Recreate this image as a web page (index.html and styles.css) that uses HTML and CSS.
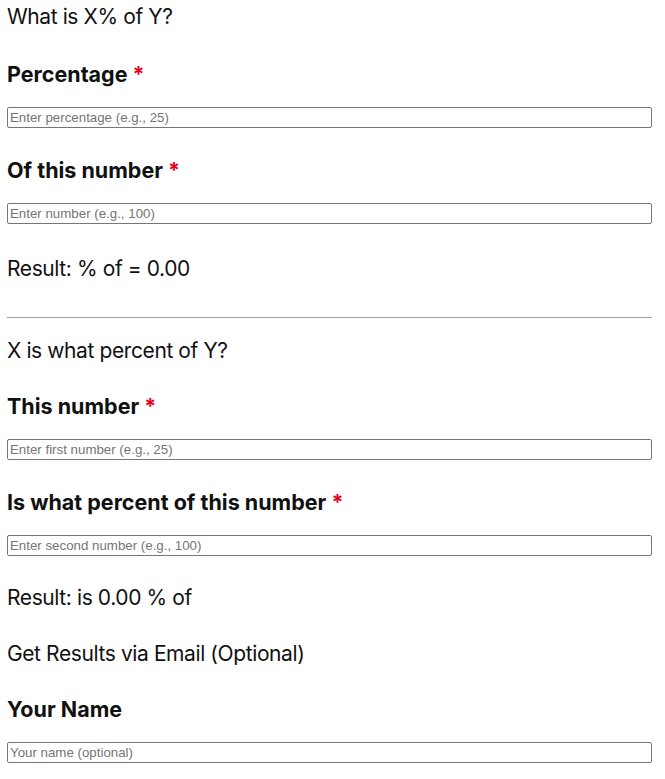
FILE: index.html
```html
<!DOCTYPE html>
<html lang="en">
<head>
<meta charset="utf-8">
<title>Percentage Calculator</title>
<link rel="stylesheet" href="styles.css">
</head>
<body>
<main class="calc">
  <section class="block">
    <h2 class="title">What is X% of Y?</h2>
    <div class="group">
      <label class="label" for="pct">Percentage <span class="req">*</span></label>
      <input class="field" id="pct" type="text" placeholder="Enter percentage (e.g., 25)">
    </div>
    <div class="group">
      <label class="label" for="num">Of this number <span class="req">*</span></label>
      <input class="field" id="num" type="text" placeholder="Enter number (e.g., 100)">
    </div>
    <p class="result">Result: % of = 0.00</p>
  </section>
  <hr class="divider">
  <section class="block">
    <h2 class="title title-second">X is what percent of Y?</h2>
    <div class="group">
      <label class="label" for="first">This number <span class="req">*</span></label>
      <input class="field" id="first" type="text" placeholder="Enter first number (e.g., 25)">
    </div>
    <div class="group">
      <label class="label" for="second">Is what percent of this number <span class="req">*</span></label>
      <input class="field" id="second" type="text" placeholder="Enter second number (e.g., 100)">
    </div>
    <p class="result">Result: is 0.00 % of</p>
    <p class="subtitle">Get Results via Email (Optional)</p>
    <div class="group">
      <label class="label" for="name">Your Name</label>
      <input class="field" id="name" type="text" placeholder="Your name (optional)">
    </div>
  </section>
</main>
</body>
</html>
```

FILE: styles.css
```css
html, body {
  margin: 0;
  padding: 0;
  background: #ffffff;
}

body {
  font-family: Inter, "Noto Sans", "Liberation Sans", sans-serif;
  color: #111111;
}

.calc {
  padding: 3px 13px 0 7px;
  display: flex;
  flex-direction: column;
}

.block {
  display: flex;
  flex-direction: column;
}

.title,
.result,
.subtitle {
  margin: 0;
  font-size: 21px;
  font-weight: 400;
  line-height: 28px;
  letter-spacing: -0.4px;
}

.title {
  margin-bottom: 29px;
}

.title-second {
  margin-bottom: 27px;
}

.group {
  display: flex;
  flex-direction: column;
  margin-bottom: 28px;
}

.label {
  font-size: 21.5px;
  font-weight: 700;
  line-height: 28px;
  margin-bottom: 19px;
  letter-spacing: 0;
}

.req {
  color: #e3001b;
}

.field {
  box-sizing: border-box;
  width: 100%;
  height: 21px;
  margin: 0;
  padding: 1px 2px;
  border: 1px solid #767676;
  border-radius: 2px;
  font-family: "Liberation Sans", Arial, sans-serif;
  font-size: 13.3px;
  color: #111;
  background: #fff;
}

.field::placeholder {
  color: #757575;
}

.result {
  margin-top: 3px;
  margin-bottom: 0;
}

.block:last-child .result {
  margin-top: 0;
  margin-bottom: 28px;
}

.subtitle {
  margin-bottom: 27px;
}

.divider {
  margin: 34px 0 19px 0;
  border: 0;
  border-top: 1px solid #a0a0a0;
  height: 0;
}
```
